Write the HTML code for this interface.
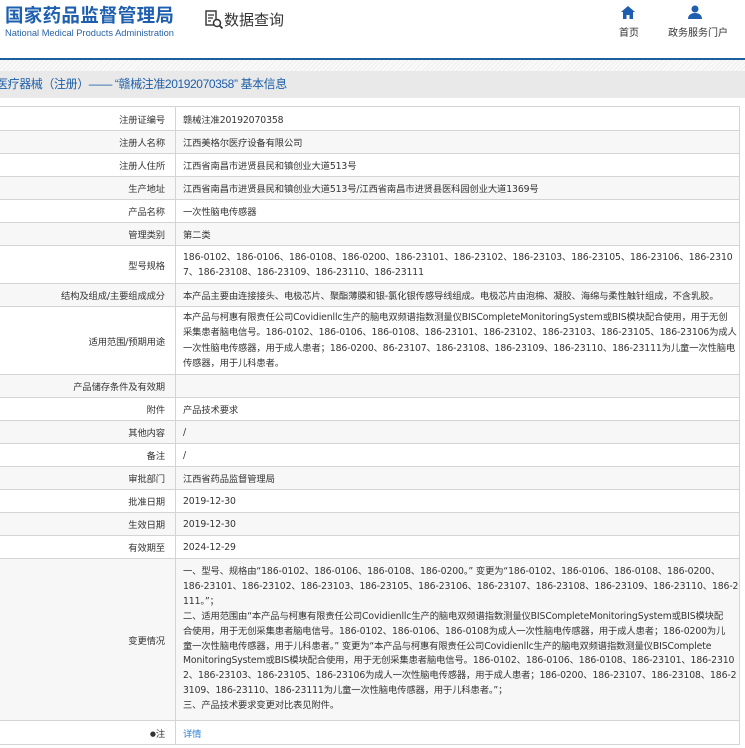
<!DOCTYPE html>
<html><head><meta charset="utf-8"><style>
*{margin:0;padding:0;box-sizing:border-box}
body{width:745px;height:748px;overflow:hidden;background:#fff;font-family:"Liberation Sans","Noto Sans CJK SC",sans-serif;color:#333;position:relative}
.logo{position:absolute;left:5px;top:2px;color:#1d5fae;font-size:18.5px;font-weight:bold;letter-spacing:0.3px;font-family:"Noto Sans CJK SC",sans-serif;line-height:26px}
.logo2{position:absolute;left:5px;top:28px;color:#2a63a8;font-size:9.3px}
.sj{position:absolute;left:204px;top:9px;font-size:15px;color:#333;font-family:"Noto Sans CJK SC",sans-serif}
.nav{position:absolute;top:24px;font-size:10px;color:#333}
.line{position:absolute;left:0;top:58px;width:745px;height:2px;background:#1c5f9e}
.hatch{position:absolute;left:0;top:60px;width:745px;height:11px;background:repeating-linear-gradient(135deg,#eee 0 1px,#fafafa 1px 3px)}
.bar{position:absolute;left:-4px;top:71px;width:760px;height:27px;background:#e9e9e9;color:#1f5fa8;font-size:12px;letter-spacing:-0.4px;line-height:27px;white-space:nowrap}
table{position:absolute;left:-2px;top:106px;width:742px;border-collapse:collapse;font-size:9.3px;letter-spacing:-0.12px;table-layout:fixed;font-family:"DejaVu Sans","Noto Sans CJK SC",sans-serif}
td{border:1px solid #d4d4d4;vertical-align:middle;white-space:nowrap;overflow:hidden}
td.l{width:177px;text-align:right;padding-right:10px}
td.v{padding-left:7px}
tr:nth-child(even) td{background:#f7f7f7}
a{color:#2a7fd4;text-decoration:none}
</style></head><body>
<div class="logo">国家药品监督管理局</div>
<div class="logo2">National Medical Products Administration</div>
<div class="sj"><svg width="20" height="20" viewBox="0 0 20 20" style="vertical-align:-4px"><rect x="2" y="2" width="10" height="14" fill="none" stroke="#333" stroke-width="1.4"/><path d="M4 6h6M4 9h5M4 12h3" stroke="#333" stroke-width="1.2"/><circle cx="13" cy="14" r="3.5" fill="#fff" stroke="#333" stroke-width="1.5"/><path d="M15.5 16.5l3 3" stroke="#333" stroke-width="1.8"/></svg>数据查询</div>
<svg style="position:absolute;left:621px;top:6px" width="14" height="13" viewBox="0 0 14 13"><path d="M7 0L0 6h2v7h3.5v-4h3v4H12V6h2z" fill="#1d5fae"/></svg>
<div class="nav" style="left:619px">首页</div>
<svg style="position:absolute;left:688px;top:5px" width="14" height="14" viewBox="0 0 14 14"><circle cx="7" cy="4" r="3.5" fill="#1d5fae"/><path d="M0 14c0-4 3-6 7-6s7 2 7 6z" fill="#1d5fae"/></svg>
<div class="nav" style="left:668px">政务服务门户</div>
<div class="line"></div><div class="hatch"></div>
<div class="bar">医疗器械（注册）—— “赣械注准20192070358” 基本信息</div>
<table>
<tr style="height:24px"><td class="l">注册证编号</td><td class="v">赣械注准20192070358</td></tr>
<tr style="height:23px"><td class="l">注册人名称</td><td class="v">江西美格尔医疗设备有限公司</td></tr>
<tr style="height:23px"><td class="l">注册人住所</td><td class="v">江西省南昌市进贤县民和镇创业大道513号</td></tr>
<tr style="height:23px"><td class="l">生产地址</td><td class="v">江西省南昌市进贤县民和镇创业大道513号/江西省南昌市进贤县医科园创业大道1369号</td></tr>
<tr style="height:23px"><td class="l">产品名称</td><td class="v">一次性脑电传感器</td></tr>
<tr style="height:23px"><td class="l">管理类别</td><td class="v">第二类</td></tr>
<tr style="height:38px"><td class="l">型号规格</td><td class="v" style="line-height:15px">186-0102、186-0106、186-0108、186-0200、186-23101、186-23102、186-23103、186-23105、186-23106、186-2310<br>7、186-23108、186-23109、186-23110、186-23111</td></tr>
<tr style="height:23px"><td class="l">结构及组成/主要组成成分</td><td class="v">本产品主要由连接接头、电极芯片、聚酯薄膜和银-氯化银传感导线组成。电极芯片由泡棉、凝胶、海绵与柔性触针组成，不含乳胶。</td></tr>
<tr style="height:68px"><td class="l">适用范围/预期用途</td><td class="v" style="line-height:15.5px">本产品与柯惠有限责任公司Covidienllc生产的脑电双频谱指数测量仪BISCompleteMonitoringSystem或BIS模块配合使用，用于无创<br>采集患者脑电信号。186-0102、186-0106、186-0108、186-23101、186-23102、186-23103、186-23105、186-23106为成人<br>一次性脑电传感器，用于成人患者；186-0200、86-23107、186-23108、186-23109、186-23110、186-23111为儿童一次性脑电<br>传感器，用于儿科患者。</td></tr>
<tr style="height:23px"><td class="l">产品储存条件及有效期</td><td class="v"></td></tr>
<tr style="height:23px"><td class="l">附件</td><td class="v">产品技术要求</td></tr>
<tr style="height:23px"><td class="l">其他内容</td><td class="v">/</td></tr>
<tr style="height:23px"><td class="l">备注</td><td class="v">/</td></tr>
<tr style="height:23px"><td class="l">审批部门</td><td class="v">江西省药品监督管理局</td></tr>
<tr style="height:23px"><td class="l">批准日期</td><td class="v">2019-12-30</td></tr>
<tr style="height:23px"><td class="l">生效日期</td><td class="v">2019-12-30</td></tr>
<tr style="height:23px"><td class="l">有效期至</td><td class="v">2024-12-29</td></tr>
<tr style="height:162px"><td class="l">变更情况</td><td class="v" style="line-height:14.9px">一、型号、规格由“186-0102、186-0106、186-0108、186-0200。” 变更为“186-0102、186-0106、186-0108、186-0200、<br>186-23101、186-23102、186-23103、186-23105、186-23106、186-23107、186-23108、186-23109、186-23110、186-23<br>111。”；<br>二、适用范围由“本产品与柯惠有限责任公司Covidienllc生产的脑电双频谱指数测量仪BISCompleteMonitoringSystem或BIS模块配<br>合使用，用于无创采集患者脑电信号。186-0102、186-0106、186-0108为成人一次性脑电传感器，用于成人患者；186-0200为儿<br>童一次性脑电传感器，用于儿科患者。” 变更为“本产品与柯惠有限责任公司Covidienllc生产的脑电双频谱指数测量仪BISComplete<br>MonitoringSystem或BIS模块配合使用，用于无创采集患者脑电信号。186-0102、186-0106、186-0108、186-23101、186-2310<br>2、186-23103、186-23105、186-23106为成人一次性脑电传感器，用于成人患者；186-0200、186-23107、186-23108、186-2<br>3109、186-23110、186-23111为儿童一次性脑电传感器，用于儿科患者。”；<br>三、产品技术要求变更对比表见附件。</td></tr>
<tr style="height:24px"><td class="l"><span style="font-size:7px;vertical-align:1px">●</span>注</td><td class="v"><a>详情</a></td></tr>
</table>
</body></html>
